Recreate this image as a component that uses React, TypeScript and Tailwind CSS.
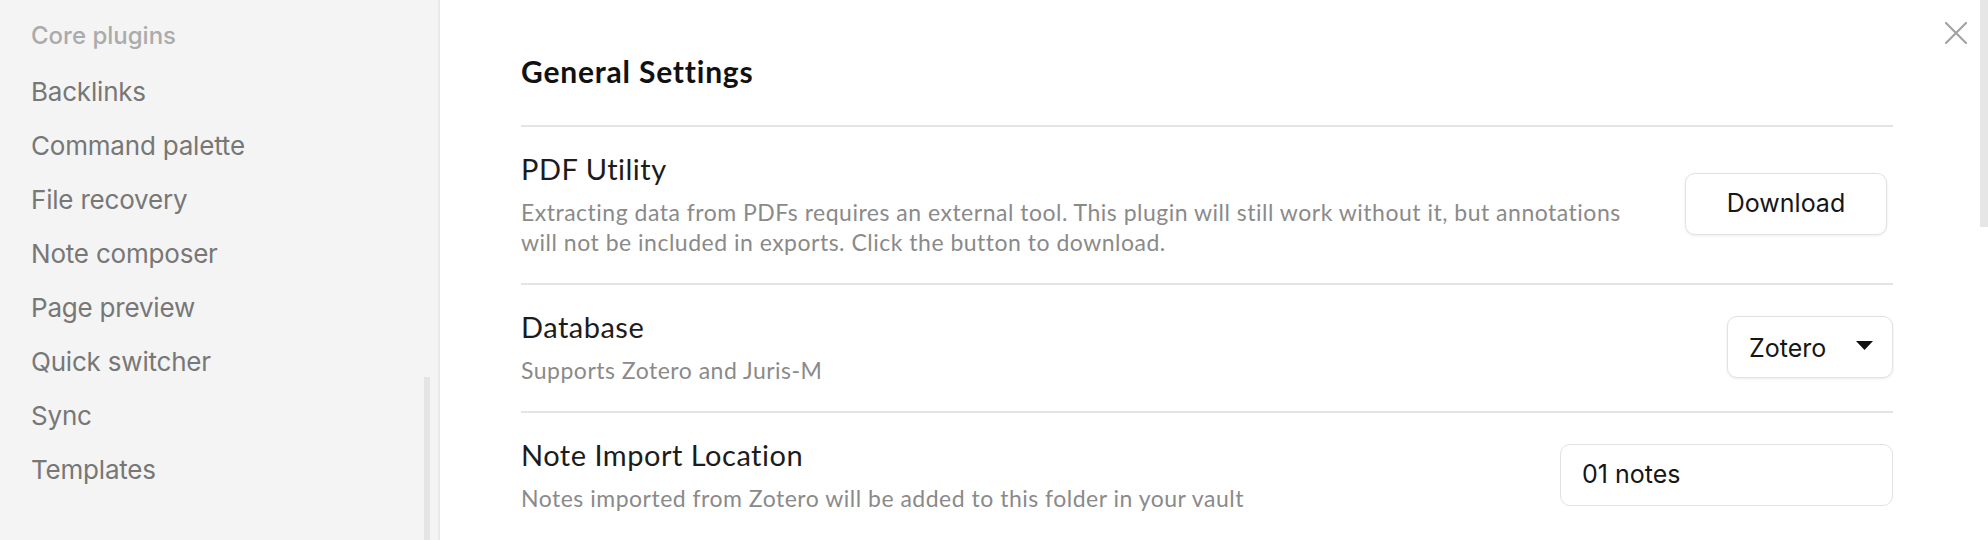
import React from 'react';

const plugins = [
  'Backlinks',
  'Command palette',
  'File recovery',
  'Note composer',
  'Page preview',
  'Quick switcher',
  'Sync',
  'Templates',
];

const Sidebar = () => (
  <aside className="relative w-[440px] shrink-0 h-full bg-[#f4f4f4] border-r-2 border-[#e9e9e9] pl-[31px] pt-[21px] font-['Inter',sans-serif]">
    <div className="text-[24px] leading-[30px] font-medium text-[#ababab] mb-[13px]">Core plugins</div>
    {plugins.map((name) => (
      <div key={name} className="h-[54px] flex items-center text-[26px] tracking-[-0.2px] text-[#777777]">
        {name}
      </div>
    ))}
    {/* scrollbar thumb */}
    <div className="absolute left-[424px] top-[377px] w-[6px] h-[200px] bg-[#e4e4e4]" />
  </aside>
);

const SettingRow = ({
  title,
  desc,
  children,
}: {
  title: string;
  desc: string;
  children: React.ReactNode;
}) => (
  <div className="flex items-center gap-[40px] border-t-2 border-[#e4e4e4] pt-[24px] pb-[26px]">
    <div className="flex-1 min-w-0">
      <div className="text-[29px] leading-[36px] tracking-[0.5px] text-[#1c1c1c]">{title}</div>
      <div className="mt-[10px] text-[23px] leading-[30px] tracking-[0.5px] text-[#8a8a8a]">{desc}</div>
    </div>
    <div className="shrink-0 flex items-center font-['Inter',sans-serif]">{children}</div>
  </div>
);

export default function App() {
  return (
    <div className="flex w-[1988px] h-[540px] overflow-hidden bg-white">
      <Sidebar />
      <main className="relative flex-1 h-full pl-[81px] pr-[95px] pt-[51px] font-['Lato',sans-serif]">
        <h2 className="text-[30px] leading-[40px] font-bold tracking-[0.8px] text-[#111111] mb-[34px]">General Settings</h2>

        <SettingRow
          title="PDF Utility"
          desc="Extracting data from PDFs requires an external tool. This plugin will still work without it, but annotations will not be included in exports. Click the button to download."
        >
          <button className="mr-[6px] w-[202px] h-[62px] rounded-[10px] border-[1.5px] border-[#e2e2e2] bg-white shadow-[0_1px_3px_rgba(0,0,0,0.08)] text-[25px] text-[#161616]">
            Download
          </button>
        </SettingRow>

        <SettingRow title="Database" desc="Supports Zotero and Juris-M">
          <div className="w-[166px] h-[62px] rounded-[10px] border-[1.5px] border-[#e2e2e2] bg-white shadow-[0_1px_3px_rgba(0,0,0,0.08)] flex items-center justify-between pl-[21px] pr-[19px] pt-[3px] text-[25px] text-[#161616]">
            <span>Zotero</span>
            <svg width="17" height="9" viewBox="0 0 17 9" className="-mt-[6px]">
              <path d="M0 0 H17 L8.5 9 Z" fill="#111111" />
            </svg>
          </div>
        </SettingRow>

        <SettingRow title="Note Import Location" desc="Notes imported from Zotero will be added to this folder in your vault">
          <div className="w-[333px] h-[62px] rounded-[10px] border-[1.5px] border-[#e2e2e2] bg-white flex items-center pl-[21px] text-[25px] text-[#161616]">
            01 notes
          </div>
        </SettingRow>

        {/* close button */}
        <svg className="absolute left-[1505px] top-[22px]" width="22" height="22" viewBox="0 0 22 22">
          <path d="M1 1 L21 21 M21 1 L1 21" stroke="#a3a3a3" strokeWidth="2.2" strokeLinecap="round" />
        </svg>
        {/* scrollbar */}
        <div className="absolute right-0 top-0 w-[8px] h-[227px] bg-[#e6e6e6]" />
      </main>
    </div>
  );
}
